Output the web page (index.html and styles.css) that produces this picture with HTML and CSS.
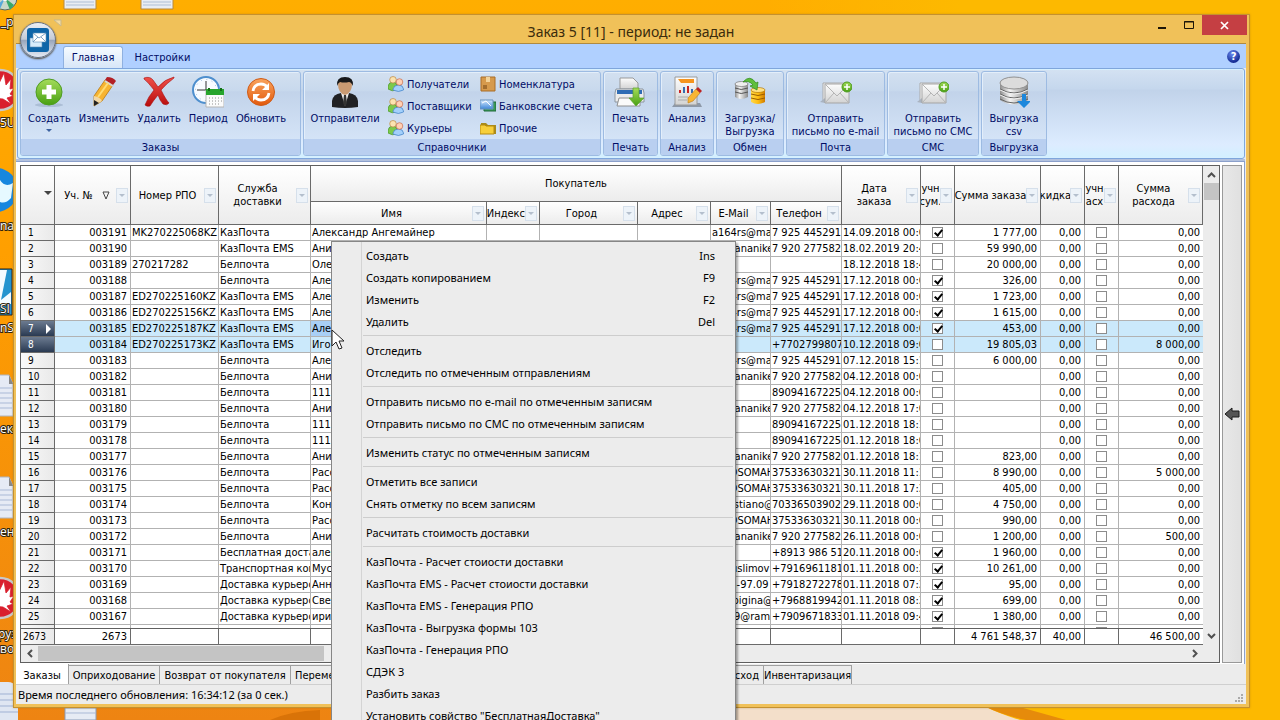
FILE: index.html
```html
<!DOCTYPE html>
<html lang="ru">
<head>
<meta charset="utf-8">
<title>Заказ 5 [11] - период: не задан</title>
<link rel="stylesheet" href="styles.css">
</head>
<body>
<svg class="defs" aria-hidden="true">
  <defs>
    <linearGradient id="green" x2="0" y2="1"><stop stop-color="#a5dc5a"/><stop offset="1" stop-color="#48a012"/></linearGradient>
    <linearGradient id="orange" x2="0" y2="1"><stop stop-color="#f9a45e"/><stop offset="1" stop-color="#e2590c"/></linearGradient>
    <linearGradient id="red" x2="0" y2="1"><stop stop-color="#f0504a"/><stop offset="1" stop-color="#b80c0c"/></linearGradient>
    <linearGradient id="gold"><stop stop-color="#ffd84a"/><stop offset=".5" stop-color="#ffbe12"/><stop offset="1" stop-color="#d07a00"/></linearGradient>
    <linearGradient id="steel"><stop stop-color="#8d8d8d"/><stop offset=".35" stop-color="#f4f4f4"/><stop offset="1" stop-color="#8a8a8a"/></linearGradient>
    <linearGradient id="paper" x2="0" y2="1"><stop stop-color="#fdfdfd"/><stop offset="1" stop-color="#d3d3d3"/></linearGradient>
    <linearGradient id="blue" x2="0" y2="1"><stop stop-color="#d4e9ff"/><stop offset="1" stop-color="#3e86d8"/></linearGradient>
    <symbol id="i-people" viewBox="0 0 16 16">
      <path d="M0 13V10q1-4 5-4t4 4v4q-5 2-9-1z" fill="#7cc94c" stroke="#3b8a1c" stroke-width=".6"/>
      <circle cx="5" cy="3.800" r="3.300" fill="#fbe3b0" stroke="#b98844" stroke-width=".7"/>
      <path d="M5 14v-1q1-4 5.500-4t5 4v1q-5 3-10.500 0z" fill="#a3d0fb" stroke="#3d7ec4" stroke-width=".7"/>
      <circle cx="11.500" cy="6" r="3.300" fill="#ffd0b4" stroke="#c66a4c" stroke-width=".7"/>
    </symbol>
    <symbol id="i-letter" viewBox="0 0 32 32">
      <path d="M3 7h21v4H6v14H3z" fill="#f4f4f4" stroke="#aaa"/>
      <path d="M0 26l5-4v5z" fill="#a9b3c0"/>
      <path d="M5 8h24v19H5z" fill="url(#paper)" stroke="#a5a5a5"/>
      <path d="M5 8l12 12L29 8M5 27l9-10M29 27l-9-10" fill="none" stroke="#b4b4b4"/>
      <circle cx="27" cy="11" r="5" fill="url(#green)" stroke="#4c9a1e"/>
      <path d="M27 8v6M24 11h6" stroke="#fff" stroke-width="1.500"/>
    </symbol>
  </defs>
</svg>

<main class="desktop">
  <svg class="wallpaper" viewBox="0 0 1280 720" preserveAspectRatio="none" aria-hidden="true">
    <path d="M736 706h248q16 8 36 14H736z" fill="#f3dfca"/>
    <path d="M984 706q18 9 42 14h40l-50-14z" fill="#e68b0b"/>
    <path d="M270 720q20-9 50-10v10z" fill="#d97308"/>
  </svg>
  <svg class="shortcuts" viewBox="0 0 180 720" aria-hidden="true">
    <circle cx="5" cy="-2" r="12" fill="#c9d7c9" stroke="#58655c"/><path d="M5-2l9 7-4 5z" fill="#39a868"/><path d="M5-2l-5 11-5-2z" fill="#57a8db"/><circle cx="5" cy="-2" r="3" fill="#fff"/>
    <g fill="#e9edf2" stroke="#b78a3e"><path d="M64-2h32V9H64zM141-2h32V9h-32z"/></g>
    <path d="M66 2h28M66 5h28M143 2h28M143 5h28" stroke="#aebfd5"/>
    <g id="fan"><circle cx="0" cy="90" r="20" fill="#d91f2d" stroke="#c9c9c9" stroke-width="2.500"/><path d="M-8 98L4 73l2 12 5-6-1 10 4-1-4 6 3 2-6 2 4 6-8-5z" fill="#fff" stroke="#d91f2d" stroke-width=".8"/></g>
    <circle cx="-4" cy="190" r="22" fill="#1787df"/><path d="M0 180q5 8 13 3l-2 15q-7 8-14 2z" fill="#e6f9ff"/>
    <path d="M-8 269h20v46H-8z" fill="#2494cf" stroke="#222"/><path d="M-8 270H7L1 300l10-8v12H-8z" fill="#f4fbff"/>
    <g id="note"><path d="M-8 375H9l4 9v32H-8z" fill="#e6ebf5" stroke="#b0b5be"/><path d="M-8 388h20M-8 393h20M-8 398h20M-8 403h20M-8 408h20" stroke="#a9b9d6"/><path d="M9 375v9h4" fill="#888"/></g>
    <use href="#note" y="102"/>
    <use href="#fan" y="508"/>
    <path d="M-8 682H8q10 0 10 14v28H-8z" fill="#dfe6f2"/><path d="M-8 694h26M-8 700h26M-8 706h26M-8 712h26" stroke="#9fb1d3"/>
    <path d="M65 708h31v12H65z" fill="#e6ebf4" stroke="#8b9bb8"/><path d="M65 713h31" stroke="#a9b9d6"/>
    <g class="shortcut-text"><text x="1" y="26">_p</text><text x="0" y="127">5U</text><text x="0" y="230">nar</text><text x="0" y="313">SI</text><text x="0" y="332">nS</text><text x="0" y="433">ек</text><text x="0" y="536">ен</text><text x="-2" y="638">руз</text><text x="0" y="653">во</text></g>
  </svg>

  <section class="window">
    <header class="titlebar">
      <h1>Заказ 5 [11] - период: не задан</h1>
      <div class="caption-buttons">
        <button class="cap" aria-label="Свернуть"><svg width="10" height="10"><path d="M1 8h8" stroke="#1d1608" stroke-width="2"/></svg></button>
        <button class="cap" aria-label="Развернуть"><svg width="12" height="10"><path d="M1.500 1.500h9v7h-9zM1 2h10" fill="none" stroke="#1d1608"/></svg></button>
        <button class="cap close" aria-label="Закрыть"><svg width="9" height="9"><path d="M1 1l7 7M8 1L1 8" stroke="#fff" stroke-width="1.700"/></svg></button>
      </div>
    </header>
    <button class="orb" aria-label="Меню приложения">
      <svg width="22" height="24" viewBox="0 0 22 24"><rect width="22" height="24" rx="3" fill="#0e65a8"/><path d="M3 10h12v9H3z" fill="#d7ecfb" stroke="#5c8db6" stroke-width=".6"/><path d="M6 5h13v9H6z" fill="#fff" stroke="#5c8db6" stroke-width=".6"/><path d="M6 5l6 5 7-5M6 14l5-5M19 14l-5-5" fill="none" stroke="#5c8db6" stroke-width=".8"/></svg>
    </button>
    <svg class="qat" width="8" height="8" aria-hidden="true"><path d="M0 1h7v6z" fill="#f6dca0" stroke="#c9b98c"/></svg>

    <div class="client">
      <nav class="ribbon-tabs">
        <button class="rtab active">Главная</button>
        <button class="rtab">Настройки</button>
        <button class="help" aria-label="Справка">?</button>
      </nav>
      <div class="ribbon">
        <section class="group g-orders">
          <div class="tools">
            <button class="tool"><svg viewBox="0 0 32 32"><ellipse cx="16" cy="29" rx="14" ry="2" fill="#8fa4bd" opacity=".5"/><circle cx="16" cy="16" r="13" fill="url(#green)" stroke="#4f9d22"/><path d="M16 9v14M9 16h14" stroke="#fff" stroke-width="5"/></svg>Создать<i class="drop"></i></button>
            <button class="tool"><svg viewBox="0 0 32 32"><path d="M6 20L17 4l8 5-11 16-8 5z" fill="#f7b431" stroke="#b87912" stroke-width=".8"/><path d="M17 4l2-3q6 0 9 4l-3 4z" fill="#b32025"/><path d="M17 5l8 5" stroke="#d5d5d5" stroke-width="2"/><path d="M6 20v10l8-5q-2-4-8-5z" fill="#f2d7a4"/><path d="M6 24v6l5-3z" fill="#222"/><path d="M10 21L20 7" stroke="#ffdc72" stroke-width="2"/></svg>Изменить</button>
            <button class="tool"><svg viewBox="0 0 32 32"><path d="M1 2q6-2 9 2l5 7q7-8 16-10v1q-8 6-13 12 5 10 8 13-2 3-6 1-3-3-5-9-5 6-8 11-3 1-5-1 3-8 9-15Q5 6 1 3z" fill="url(#red)" stroke="#a90d0d" stroke-width=".6"/></svg>Удалить</button>
            <button class="tool"><svg viewBox="0 0 32 32"><circle cx="14" cy="14" r="13" fill="#f8fbff" stroke="#4e8fce" stroke-width="2"/><circle cx="14" cy="14" r="10.500" fill="none" stroke="#9abbe0" stroke-dasharray="1 4.500"/><path d="M14 5v9H5M14 14l7 1" fill="none" stroke="#333"/><path d="M14 14h18v17H14z" fill="#fbfbfb" stroke="#b5b5b5"/><path d="M14 13h18v6H14z" fill="#27a52d"/><path d="M17 12v3M29 12v3" stroke="#147017" stroke-width="2"/><path d="M17 22h13M17 25h13M17 28h10" stroke="#909090" stroke-dasharray="1 2"/></svg>Период</button>
            <button class="tool"><svg viewBox="0 0 32 32"><circle cx="16" cy="16" r="13.500" fill="url(#orange)" stroke="#cf5b17"/><path d="M8 15q1-7 8-7 4 0 6 3M24 17q-1 7-8 7-4 0-6-3" fill="none" stroke="#fff" stroke-width="2.800"/><path d="M24 7v7h-7zM8 25v-7h7z" fill="#fff"/></svg>Обновить</button>
          </div>
          <h2>Заказы</h2>
        </section>
        <section class="group g-refs">
          <div class="tools">
            <button class="tool"><svg viewBox="0 0 32 32"><path d="M3 31v-6q1-7 9-8h8q8 1 9 8v6q-13 2-26 0z" fill="#202124"/><path d="M12 17l4 13 4-13z" fill="#eee"/><path d="M15 19h2l1 8-2 4-2-4z" fill="#333"/><path d="M9 8q0-5 7-5t7 5q0 9-7 11-7-2-7-11z" fill="#c99a72"/><path d="M8 10q-1-9 8-9t8 9q-2-4-4-4-5 1-9 0-2 1-3 4z" fill="#17181a"/></svg>Отправители</button>
            <div class="small-tools">
              <button><svg viewBox="0 0 16 16"><use href="#i-people"/></svg>Получатели</button>
              <button><svg viewBox="0 0 16 16"><use href="#i-people"/></svg>Поставщики</button>
              <button><svg viewBox="0 0 16 16"><use href="#i-people"/></svg>Курьеры</button>
            </div>
            <div class="small-tools">
              <button><svg viewBox="0 0 16 16"><path d="M1 1h14v14H1z" fill="#d69a4c" stroke="#a96c26"/><path d="M6 1h4v5H6z" fill="#f3d39a"/><path d="M3 12h4M3 10h4" stroke="#704311"/></svg>Номенклатура</button>
              <button><svg viewBox="0 0 16 16"><path d="M4 4h12v9H4z" fill="#3a9a57" stroke="#1e6a38"/><path d="M0 2h13v9H0z" fill="url(#blue)" stroke="#6892bd"/><path d="M2 5l4-2 5 5" stroke="#fff" fill="none"/></svg>Банковские счета</button>
              <button><svg viewBox="0 0 16 16"><path d="M1 3h5l2 2h8v9H1z" fill="#a88b1c"/><path d="M0 5h5l1 1h8v8H0z" fill="#f7cf3a" stroke="#b58a10"/></svg>Прочие</button>
            </div>
          </div>
          <h2>Справочники</h2>
        </section>
        <section class="group g-print">
          <div class="tools"><button class="tool"><svg viewBox="0 0 32 32"><path d="M6 13V2h13l5 5v6z" fill="url(#paper)" stroke="#999"/><path d="M2 13h27l1 4v9H1v-9z" fill="#ececec" stroke="#8c96a0"/><path d="M3 14h25v4H3z" fill="#2f6cb4"/><path d="M5 22h21v8H3z" fill="#fafafa" stroke="#909090"/><path d="M19 12h6v10h5l-8 8-7-8h4z" fill="url(#green)" stroke="#5aa52b" stroke-width=".7"/></svg>Печать</button></div>
          <h2>Печать</h2>
        </section>
        <section class="group g-analysis">
          <div class="tools"><button class="tool"><svg viewBox="0 0 32 32"><path d="M1 31l3-4h25l2 4z" fill="#8d98a8"/><path d="M4 1h22v28H4z" fill="url(#paper)" stroke="#9a9a9a"/><path d="M7 3h16v4H10z" fill="#f5941e"/><path d="M9 17v-3M17 17v-7" stroke="#c22" stroke-width="2"/><path d="M13 17v-6M21 17v-4" stroke="#366cb0" stroke-width="2"/><path d="M7 21h10M7 24h9" stroke="#aaa"/><path d="M17 22l8-9 4 4-7 8-5 2z" fill="#f8b533" stroke="#bd7b17" stroke-width=".6"/><path d="M25 13l2-2 4 4-2 2z" fill="#bb2323"/></svg>Анализ</button></div>
          <h2>Анализ</h2>
        </section>
        <section class="group g-exchange">
          <div class="tools"><button class="tool"><svg viewBox="0 0 32 32"><path d="M1 8v13q6 4 13 0V8z" fill="url(#steel)"/><path d="M1 12q6 3 13 0M1 16q6 3 13 0" fill="none" stroke="#555"/><ellipse cx="7.500" cy="8" rx="6.500" ry="2.500" fill="#eee" stroke="#777" stroke-width=".7"/><path d="M17 14v12q7 4 14 0V14z" fill="url(#gold)"/><path d="M17 18q7 3 14 0M17 22q7 3 14 0" fill="none" stroke="#9a5d00"/><ellipse cx="24" cy="14" rx="7" ry="2.500" fill="#ffe183" stroke="#b47a08" stroke-width=".7"/><path d="M9 6q7-8 13 1l2-1-1 8-7-4 3-1q-4-5-10-3z" fill="#5fbe3b" stroke="#2f8a1a" stroke-width=".7"/></svg>Загрузка/<br>Выгрузка</button></div>
          <h2>Обмен</h2>
        </section>
        <section class="group g-mail">
          <div class="tools"><button class="tool"><svg viewBox="0 0 32 32"><use href="#i-letter"/></svg>Отправить<br>письмо по e-mail</button></div>
          <h2>Почта</h2>
        </section>
        <section class="group g-sms">
          <div class="tools"><button class="tool"><svg viewBox="0 0 32 32"><use href="#i-letter"/></svg>Отправить<br>письмо по СМС</button></div>
          <h2>СМС</h2>
        </section>
        <section class="group g-csv">
          <div class="tools"><button class="tool"><svg viewBox="0 0 32 32"><path d="M2 6v18q14 9 28 0V6z" fill="url(#steel)"/><path d="M2 13q14 8 28 0M2 18q14 8 28 0M2 23q14 8 28 0" fill="none" stroke="#666"/><path d="M2 14q14 8 28 0M2 19q14 8 28 0" fill="none" stroke="#eee"/><ellipse cx="16" cy="7" rx="14" ry="6" fill="#dcdcdc" stroke="#909090"/><path d="M24 18h4v7h5l-7 7-7-7h5z" fill="#1c87dc"/></svg>Выгрузка<br>csv</button></div>
          <h2>Выгрузка</h2>
        </section>
      </div>

      <div class="page">
        <div class="grid">
          <div class="grid-main">
            <div class="tables">
              <div class="rows"><table id="orders"></table></div>
              <div class="totals"><table id="totals"></table></div>
            </div>
            <div class="vscroll"><svg width="9" height="6"><path d="M1 5l3.500-3.500L8 5" fill="none" stroke="#505050" stroke-width="2"/></svg><i></i><svg width="9" height="6"><path d="M1 1l3.500 3.500L8 1" fill="none" stroke="#505050" stroke-width="2"/></svg></div>
          </div>
          <div class="hscroll"><svg width="6" height="9"><path d="M5 1L1.500 4.500 5 8" fill="none" stroke="#505050" stroke-width="2"/></svg><i></i><svg width="6" height="9"><path d="M1 1l3.500 3.500L1 8" fill="none" stroke="#505050" stroke-width="2"/></svg></div>
        </div>
        <button class="side" aria-label="Развернуть панель"><svg width="16" height="14" viewBox="0 0 16 14"><path d="M1 7l7-6v3h7v6H8v3z" fill="#555" stroke="#1c1c1c"/></svg></button>
      </div>

      <nav class="sheet-tabs">
        <button class="active">Заказы</button>
        <button class="t-income">Оприходование</button>
        <button class="t-return">Возврат от покупателя</button>
        <button class="t-move">Перемещение</button>
        <button class="t-out">Расход</button>
        <button class="t-stock">Инвентаризация</button>
      </nav>
      <footer class="status"><span>Время последнего обновления: 16:34:12 (за 0 сек.)</span>
        <svg width="10" height="10" aria-hidden="true"><path d="M7 1h2M4 4h2M7 4h2M1 7h2M4 7h2M7 7h2" stroke="#aaa" stroke-width="2"/></svg></footer>
    </div>
  </section>

  <div class="menu" role="menu">
    <button>Создать<kbd>Ins</kbd></button>
    <button>Создать копированием<kbd>F9</kbd></button>
    <button>Изменить<kbd>F2</kbd></button>
    <button>Удалить<kbd>Del</kbd></button>
    <hr>
    <button>Отследить</button>
    <button>Отследить по отмеченным отправлениям</button>
    <hr>
    <button>Отправить письмо по e-mail по отмеченным записям</button>
    <button>Отправить письмо по СМС по отмеченным записям</button>
    <hr>
    <button>Изменить статус по отмеченным записям</button>
    <hr>
    <button>Отметить все записи</button>
    <button>Снять отметку по всем записям</button>
    <hr>
    <button>Расчитать стоимость доставки</button>
    <hr>
    <button>КазПочта - Расчет стоиости доставки</button>
    <button>КазПочта EMS - Расчет стоиости доставки</button>
    <button>КазПочта EMS - Генерация РПО</button>
    <button>КазПочта - Выгрузка формы 103</button>
    <button>КазПочта - Генерация РПО</button>
    <button>СДЭК 3</button>
    <button>Разбить заказ</button>
    <button>Установить совйство "БесплатнаяДоставка"</button>
  </div>
  <svg class="cursor" width="14" height="21" viewBox="0 0 14 21" aria-hidden="true"><path d="M1 1v16l4-4 3 7 3-1-3-7h5z" fill="#fff" stroke="#222"/></svg>
</main>
<script src="script.js"></script>
</body>
</html>
```

FILE: styles.css
```css
* { box-sizing: border-box; }
body { margin: 0; overflow: hidden; font: 11px/13px "DejaVu Sans Condensed", "Noto Sans", sans-serif; color: #000; }
button { font: inherit; color: inherit; background: none; border: 0; padding: 0; margin: 0; }
h1, h2 { margin: 0; font-weight: normal; font-size: inherit; }
.defs { position: absolute; width: 0; height: 0; }

.desktop { position: relative; height: 100vh; overflow: hidden;
  background: linear-gradient(90deg, transparent 60%, #fdb900 75%), linear-gradient(#ffae00, #ff9f00 35%, #ee8412); }
.wallpaper { position: absolute; inset: 0; width: 100%; height: 100%; }
.shortcuts { position: absolute; left: 0; top: 0; width: 180px; height: 720px; }
.shortcut-text { fill: #fff; stroke: #33270f; stroke-width: 2px; paint-order: stroke; font: 12px "Open Sans", sans-serif; }

.window { position: absolute; inset: 14px 30px 12px 13px; display: flex; flex-direction: column;
  background: #f0c159; border: 1px solid #c49130; padding: 0 3px 3px 2px; box-shadow: 0 0 2px #a0701866; }
.titlebar { height: 28px; display: flex; justify-content: center; align-items: center; }
.titlebar h1 { font: 14px/20px "Noto Sans", sans-serif; color: #3b2c0c; padding-top: 5px; }
.caption-buttons { position: absolute; right: 2px; top: 0; display: flex; }
.cap { width: 27px; height: 20px; display: grid; place-items: center; }
.close { width: 45px; background: #c53f43; }
.orb { position: absolute; z-index: 2; left: 6px; top: 7px; width: 36px; height: 36px; border-radius: 50%;
  border: 1px solid #68717f; display: grid; place-items: center;
  background: linear-gradient(#eceff4, #c3cad6 48%, #98a5ba 50%, #e3eaf4); box-shadow: 0 1px 2px #4a3f2a; }
.qat { position: absolute; left: 40px; top: 4px; }

.client { flex: 1; min-height: 0; display: flex; flex-direction: column; background: #ececec; border-top: 1px solid #b08a40; }
.ribbon-tabs { height: 24px; display: flex; align-items: flex-end; background: #b0d0ff; padding: 0 6px 0 47px; color: #000c66; }
.rtab { height: 22px; width: 60px; }
.rtab.active { border: 1px solid #8fb1e0; border-bottom: 0; border-radius: 3px 3px 0 0; background: linear-gradient(#f6fbff, #d7e6f8); }
.rtab + .rtab { width: 79px; }
.help { margin: 0 0 5px auto; width: 13px; height: 13px; border-radius: 50%; color: #fff; font-weight: bold; line-height: 12px;
  background: radial-gradient(circle at 40% 30%, #6a8af0, #152c94 70%); }

.ribbon { height: 91px; display: flex; gap: 2px; padding: 2px; margin: 0 1px; border: 1px solid #7fa6dc; border-radius: 3px; color: #000c66;
  background: linear-gradient(#d4e2f2, #c5d7ed 22%, #c1d3ea 24%, #ddecff 85%, #d2f0ff); box-shadow: inset 0 0 0 1px #d6f0ff; }
.group { display: flex; flex-direction: column; overflow: hidden; border: 1px solid #9dbbe2; border-radius: 3px;
  background: linear-gradient(#d3e0f0, #c8d9ed 22%, #c2d3ea 24%, #dae9fb); box-shadow: inset 1px 1px 0 #e3eefa; }
.group h2 { flex: none; height: 16px; line-height: 17px; text-align: center; background: #b9cff0; }
.tools { flex: 1; display: flex; justify-content: center; }
.g-orders { width: 281px; }
.g-refs { width: 298px; }
.g-print { width: 55px; }
.g-analysis { width: 54px; }
.g-exchange { width: 68px; }
.g-mail { width: 99px; }
.g-sms { width: 92px; }
.g-csv { width: 66px; }
.tool { display: flex; flex-direction: column; align-items: center; padding: 4px 4px 0; white-space: nowrap; }
.tool svg { width: 32px; height: 32px; margin-bottom: 4px; flex: none; }
.drop { width: 0; border: 3px solid transparent; border-top-color: #3c62a0; margin-top: 4px; }
.g-orders .tools, .g-refs .tools { justify-content: flex-start; }
.g-orders .tools { padding-left: 3px; }
.g-refs .tool { width: 82px; }
.small-tools { display: flex; flex-direction: column; padding: 1px 0 0 2px; width: 92px; }
.small-tools + .small-tools { width: 116px; }
.small-tools button { display: flex; align-items: center; gap: 3px; height: 22px; white-space: nowrap; }
.small-tools svg { width: 16px; height: 16px; flex: none; }

.page { flex: 1; min-height: 0; display: flex; gap: 2px; margin: 2px 1px 0 0; padding: 3px 2px 1px 4px; background: #fff; border-top: 1px solid #8ba0cb; border-right: 1px solid #8ba0cb; box-shadow: 0 -2px #b2c1de; }
.grid { flex: 1; min-width: 0; display: flex; flex-direction: column; border: 1px solid #5f5f5f; background: #ececec; }
.grid-main { flex: 1; min-height: 0; display: flex; }
.tables { flex: 1; min-width: 0; display: flex; flex-direction: column; background: #fff; }
.rows { flex: 1; min-height: 0; overflow: hidden; }
table { width: 100%; table-layout: fixed; border-collapse: separate; border-spacing: 0; }
td, th { padding: 0; overflow: hidden; white-space: nowrap; font-weight: normal; }
thead th { background: linear-gradient(#fff, #ececec); border-right: 1px solid #6a6a6a; border-bottom: 1px solid #6a6a6a; }
thead .h1 th { height: 36px; }
thead .h2 th { height: 23px; }
.head { display: flex; align-items: center; padding-right: 2px; }
.head span { flex: 1; min-width: 0; overflow: hidden; display: flex; justify-content: center; text-align: center; }
.head button { flex: none; width: 12px; height: 15px; border: 1px solid #d6e0eb; background: #edf3f9; display: grid; place-items: center; }
.head button::after { content: ""; border: 3px solid transparent; border-top-color: #b4bfcd; margin-top: 3px; }
.sort { flex: none; margin-right: 6px; }
.corner::after { content: ""; display: block; width: 0; margin: 0 2px 0 auto; border: 4px solid transparent; border-top-color: #444; }
tbody td { height: 16px; line-height: 15px; padding: 0 1px; border-right: 1px solid #b2b2b2; border-bottom: 1px solid #b2b2b2; }
tbody .num { font-size: 10px; text-align: left; height: 16px; line-height: 15px; padding-left: 7px; background: linear-gradient(90deg, #fafafa, #e9e9e9); border-right: 1px solid #6a6a6a; border-bottom: 1px solid #6a6a6a; }
tbody tr > :last-child { border-right: 0; }
tbody .r { text-align: right; padding-right: 3px; }
.sel td { background: #cbe9fb; }
.sel .num { background: linear-gradient(#6c7b90, #2a3a52); color: #fff; }
.sel .focus { background: #a9cff5; }
.ptr { float: right; width: 0; margin: 3px 3px 0 0; border: 5px solid transparent; border-left-color: #fff; border-right: 0; }
td input { appearance: none; display: block; position: relative; width: 11px; height: 11px; margin: 0 auto; border: 1px solid #8c8c8c; background: #fff; }
td input:checked::after { content: ""; position: absolute; left: 3px; top: 0; width: 3px; height: 6px; border: solid #000; border-width: 0 2px 2px 0; rotate: 40deg; }
.totals { border-top: 1px solid #5f5f5f; background: #fff; }
.totals td { height: 16px; border-color: #6a6a6a; }
.totals .num { padding-left: 2px; }
.vscroll { width: 16px; display: flex; flex-direction: column; align-items: center; padding: 6px 0; }
.vscroll i { width: 15px; height: 17px; background: #c4c4c4; margin: 5px 0 auto; }
.hscroll { height: 17px; display: flex; align-items: center; padding: 0 21px 0 6px; }
.hscroll i { width: 286px; height: 15px; background: #c4c4c4; margin: 0 auto 0 5px; }
.side { width: 20px; border: 1px solid #999; background: linear-gradient(90deg, #e8e8e8, #e0e0e0); display: grid; place-items: center; }

.sheet-tabs { height: 21px; display: flex; align-items: flex-start; border-bottom: 1px solid #cfcfcf; }
.sheet-tabs button { height: 19px; margin-top: 1px; border: 1px solid #a0a0a0; border-bottom: 0; border-left: 0; white-space: nowrap; }
.sheet-tabs .active { width: 53px; height: 20px; margin: 0; background: #fff; border-top: 0; padding-top: 3px; }
.t-income { width: 91px; }
.t-return { width: 131px; }
.t-move { width: 224px; text-align: left; padding-left: 4px; }
.t-out { width: 249px; text-align: right; padding-right: 4px; }
.t-stock { width: 88px; }
.status { height: 19px; display: flex; justify-content: space-between; align-items: center; padding: 0 2px; font-family: "Noto Sans", sans-serif; }
.status svg { align-self: flex-end; }

.menu { position: absolute; z-index: 5; left: 331px; top: 241px; width: 405px; padding: 2px 0; border: 1px solid #868686;
  background: linear-gradient(90deg, transparent 29px, #d4d4d4 29px, #d4d4d4 30px, transparent 30px), #ececec;
  box-shadow: 2px 2px 2px #0005; font: 11px/15px "Noto Sans", sans-serif; }
.menu button { display: flex; justify-content: space-between; align-items: center; width: 100%; height: 22px; padding: 0 20px 0 34px; white-space: nowrap; }
.menu kbd { font: inherit; }
.menu hr { height: 1px; margin: 3px 2px 3px 31px; border: 0; background: #cdcdcd; }
.cursor { position: absolute; z-index: 6; left: 331px; top: 329px; }
```

FILE: script.js
```javascript
const widths = [34, 76, 88, 92, 0, 53, 98, 73, 60, 71, 79, 34, 86, 44, 34, 84];
const cols = '<colgroup>' + widths.map(w => w ? `<col style="width:${w}px">` : '<col>').join('') + '</colgroup>';

// number, RPO, service, name, e-mail, phone, date, checked, sum, expense
const orders = [
  ['003191', 'MK270225068KZ', 'КазПочта', 'Александр Ангемайнер', 'a164rs@mail.ru', '7 925 4452910', '14.09.2018 00:00', 1, '1 777,00', '0,00'],
  ['003190', '', 'КазПочта EMS', 'Аника', 'rom.ananike', '7 920 2775826', '18.02.2019 20:45', 0, '59 990,00', '0,00'],
  ['003189', '270217282', 'Белпочта', 'Олег', '', '', '18.12.2018 18:44', 0, '20 000,00', '0,00'],
  ['003188', '', 'Белпочта', 'Александр', 'a164rs@mail.ru', '7 925 4452910', '17.12.2018 00:00', 1, '326,00', '0,00'],
  ['003187', 'ED270225160KZ', 'КазПочта EMS', 'Александр', 'a164rs@mail.ru', '7 925 4452910', '17.12.2018 00:00', 1, '1 723,00', '0,00'],
  ['003186', 'ED270225156KZ', 'КазПочта EMS', 'Александр', 'a164rs@mail.ru', '7 925 4452910', '17.12.2018 00:00', 1, '1 615,00', '0,00'],
  ['003185', 'ED270225187KZ', 'КазПочта EMS', 'Александр', 'a164rs@mail.ru', '7 925 4452910', '17.12.2018 00:00', 1, '453,00', '0,00'],
  ['003184', 'ED270225173KZ', 'КазПочта EMS', 'Игорь', '', '+7702799807', '10.12.2018 09:00', 0, '19 805,03', '8 000,00'],
  ['003183', '', 'Белпочта', 'Александр', 'a164rs@mail.ru', '7 925 4452910', '07.12.2018 15:15', 0, '6 000,00', '0,00'],
  ['003182', '', 'Белпочта', 'Аника', 'rom.ananike', '7 920 2775826', '04.12.2018 00:00', 0, '', '0,00'],
  ['003181', '', 'Белпочта', '111', '', '89094167225', '04.12.2018 00:00', 0, '', '0,00'],
  ['003180', '', 'Белпочта', 'Аника', 'rom.ananike', '7 920 2775826', '04.12.2018 17:00', 0, '', '0,00'],
  ['003179', '', 'Белпочта', '111', '', '89094167225', '01.12.2018 18:11', 0, '', '0,00'],
  ['003178', '', 'Белпочта', '111', '', '89094167225', '01.12.2018 18:00', 0, '', '0,00'],
  ['003177', '', 'Белпочта', 'Аника', 'rom.ananike', '7 920 2775826', '01.12.2018 18:11', 0, '823,00', '0,00'],
  ['003176', '', 'Белпочта', 'Рассомаха', 'G.ROSOMAHA', '375336303213', '30.11.2018 11:11', 0, '8 990,00', '5 000,00'],
  ['003175', '', 'Белпочта', 'Рассомаха', 'G.ROSOMAHA', '375336303213', '30.11.2018 17:33', 0, '405,00', '0,00'],
  ['003174', '', 'Белпочта', 'Константин', 'mcristiano@', '70336503902', '29.11.2018 00:00', 0, '4 750,00', '0,00'],
  ['003173', '', 'Белпочта', 'Рассомаха', 'G.ROSOMAHA', '375336303213', '30.11.2018 00:00', 0, '990,00', '0,00'],
  ['003172', '', 'Белпочта', 'Аника', 'rom.ananike', '7 920 2775826', '26.11.2018 00:00', 0, '1 200,00', '500,00'],
  ['003171', '', 'Бесплатная доставка', 'александр', '', '+8913 986 51', '20.11.2018 00:00', 1, '1 960,00', '0,00'],
  ['003170', '', 'Транспортная компания', 'Муслимов', 'd.muslimov', '+7916961181', '01.11.2018 00:33', 1, '10 261,00', '0,00'],
  ['003169', '', 'Доставка курьером', 'Анна', 'anna-97.09', '+7918272278', '01.11.2018 07:33', 1, '95,00', '0,00'],
  ['003168', '', 'Доставка курьером', 'Светлана', 'na.spigina@', '+7968819942', '01.11.2018 08:33', 1, '699,00', '0,00'],
  ['003167', '', 'Доставка курьером', 'ирина', 'irin99@ram', '+7909671833', '01.11.2018 09:44', 1, '1 380,00', '0,00'],
  ['', '', '', '', '', '', '', 0, '', '']
];

const head = (text, attrs = '', extra = '') =>
  `<th ${attrs}><div class="head"><span>${text}</span>${extra}<button aria-label="Фильтр"></button></div></th>`;
const sort = '<svg class="sort" width="8" height="9"><path d="M1 1h6L4 8z" fill="none" stroke="#444"/></svg>';
const two = 'rowspan="2"';
const box = on => `<td><input type="checkbox" aria-label="Учитывать"${on ? ' checked' : ''}></td>`;

const thead = `<thead><tr class="h1"><th class="corner" ${two}></th>${head('Уч. №', two, sort)}${head('Номер РПО', two)}${head('Служба<br>доставки', two)}
<th colspan="6">Покупатель</th>${head('Дата<br>заказа', two)}${head('учн<br>сум.', two)}${head('Сумма заказа', two)}${head('кидка', two)}${head('учн<br>асх', two)}${head('Сумма<br>расхода', two)}</tr>
<tr class="h2">${['Имя', 'Индекс', 'Город', 'Адрес', 'E-Mail', 'Телефон'].map(t => head(t)).join('')}</tr></thead>`;

const body = orders.map((o, i) => {
  const selected = i === 6 || i === 7;
  return `<tr${selected ? ' class="sel"' : ''}><th class="num">${i === 6 ? '<i class="ptr"></i>' : ''}${o[0] ? i + 1 : ''}</th>
<td class="r">${o[0]}</td><td>${o[1]}</td><td>${o[2]}</td><td${i === 6 ? ' class="focus"' : ''}>${o[3]}</td><td></td><td></td><td></td>
<td>${o[4]}</td><td>${o[5]}</td><td>${o[6]}</td>${box(o[7])}<td class="r">${o[8]}</td><td class="r">${o[0] ? '0,00' : ''}</td>${box(0)}<td class="r">${o[9]}</td></tr>`;
}).join('');

document.getElementById('orders').innerHTML = cols + thead + '<tbody>' + body + '</tbody>';
document.getElementById('totals').innerHTML = cols +
  '<tbody><tr><th class="num">2673</th><td class="r">2673</td>' + '<td></td>'.repeat(10) +
  '<td class="r">4 761 548,37</td><td class="r">40,00</td><td></td><td class="r">46 500,00</td></tr></tbody>';
```
